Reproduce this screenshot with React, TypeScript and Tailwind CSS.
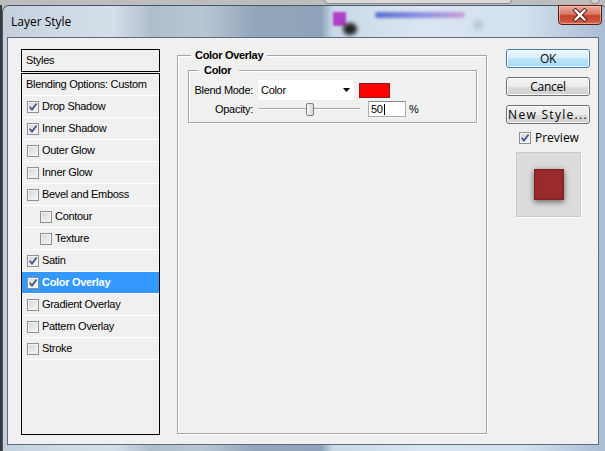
import React from "react";

type Row = { label: string; checked: boolean; indent?: boolean; selected?: boolean };

const rows: Row[] = [
  { label: "Drop Shadow", checked: true },
  { label: "Inner Shadow", checked: true },
  { label: "Outer Glow", checked: false },
  { label: "Inner Glow", checked: false },
  { label: "Bevel and Emboss", checked: false },
  { label: "Contour", checked: false, indent: true },
  { label: "Texture", checked: false, indent: true },
  { label: "Satin", checked: true },
  { label: "Color Overlay", checked: true, selected: true },
  { label: "Gradient Overlay", checked: false },
  { label: "Pattern Overlay", checked: false },
  { label: "Stroke", checked: false },
];

function CheckBox({ checked }: { checked: boolean }) {
  return (
    <span className="flex h-[12px] w-[12px] shrink-0 items-center justify-center border border-[#8e8f8f] bg-[linear-gradient(135deg,#d2d4d8,#f8f8f8)] shadow-[inset_0_0_0_1px_#f4f4f4]">
      {checked && (
        <svg width="10" height="10" viewBox="0 0 10 10">
          <path d="M1.6 4.8 L4 7.6 L8.6 1.6" fill="none" stroke="#3f5580" strokeWidth="1.7" />
        </svg>
      )}
    </span>
  );
}

function Button({ children, primary, wide }: { children: React.ReactNode; primary?: boolean; wide?: boolean }) {
  return (
    <div
      className={
        "flex h-[19px] w-[84px] items-center justify-center rounded-[3px] border text-[12px] text-black shadow-[inset_0_0_0_1px_#fbfbfb] font-['Open_Sans',sans-serif] " +
        (primary
          ? "border-[#3c7fb1] bg-[linear-gradient(180deg,#eaf6fd_0%,#d9f0fc_50%,#bee6fd_50%,#a7d9f5_100%)]"
          : "border-[#707070] bg-[linear-gradient(180deg,#f2f2f2_0%,#ebebeb_50%,#dddddd_50%,#cfcfcf_100%)]") +
        (wide ? " tracking-[1.3px]" : "")
      }
    >
      {children}
    </div>
  );
}

export default function App() {
  return (
    <div className="relative h-[451px] w-[605px] overflow-hidden bg-[linear-gradient(90deg,#3a3a3a_0px,#3a3a3a_2px,#b9b9b9_2px)] font-['Liberation_Sans',Arial,sans-serif] text-[11px] tracking-[-0.3px] text-black">
      {/* background window edge behind the dialog */}
      <div className="absolute left-0 top-0 h-[5px] w-[605px] bg-[#bdbdbd]" />
      <div className="absolute left-[324px] top-[-4px] h-[8px] w-[188px] rounded-[4px] border border-[#8a8a8a] bg-[#dadada]" />
      <div className="absolute left-[590px] top-[-4px] h-[8px] w-[10px] rounded-full border border-[#8a8a8a] bg-[#d0d0d0]" />

      {/* dialog window */}
      <div className="relative ml-[2px] mt-[5px] h-[450px] w-[606px] rounded-t-[7px] border border-[#4a5768] bg-[linear-gradient(90deg,#c4d0dc_0px,#cfdae5_60px,#d4dfe9_110px,#aebdcc_150px,#b9c7d4_200px,#93a7bc_250px,#8ea3b9_318px,#c9d9e8_330px,#dae6f1_420px,#d2e1ee_520px,#a9bdd4_600px)]">
        {/* title bar */}
        <div className="relative flex h-[31px] items-center overflow-hidden pl-[8px]">
          <div className="absolute left-[330px] top-[6px] h-[14px] w-[13px] bg-[#b13ec6] blur-[1px]" />
          <div className="absolute left-[340px] top-[17px] h-[12px] w-[14px] rounded-full bg-[#222] blur-[2px]" />
          <div className="absolute left-[372px] top-[6px] h-[6px] w-[90px] rounded-full bg-[linear-gradient(90deg,#5b6fd0,#8d8ee0,#c9a2d9)] blur-[1.5px]" />
          <div className="absolute left-[470px] top-[14px] h-[10px] w-[10px] rounded-full bg-[#b9c6d6] blur-[2px]" />
          <span className="relative font-['Open_Sans',sans-serif] text-[12px] tracking-normal text-black">Layer Style</span>
        </div>

        {/* close button */}
        <div className="absolute left-[555px] top-[-1px] flex h-[20px] w-[44px] items-center justify-center rounded-b-[4px] border border-[#5a1a10] bg-[linear-gradient(180deg,#e9a99c_0%,#d87864_45%,#c4402a_55%,#d6634c_100%)] shadow-[inset_0_0_0_1px_rgba(255,220,210,0.5)]">
          <svg width="16" height="14" viewBox="0 0 16 14">
            <path d="M3.5 2.5 L12.5 11.5 M12.5 2.5 L3.5 11.5" stroke="#45140c" strokeWidth="4.2" strokeLinecap="square" />
            <path d="M3.5 2.5 L12.5 11.5 M12.5 2.5 L3.5 11.5" stroke="#ffffff" strokeWidth="2.4" strokeLinecap="square" />
          </svg>
        </div>

        {/* client area */}
        <div className="ml-[4px] h-[408px] w-[592px] border border-[#5d6c7e] bg-[#f0f0f0]">
          <div className="flex h-full">
            {/* left list */}
            <div className="pl-[13px] pt-[11px]">
              <div className="flex h-[23px] w-[139px] items-center border border-black pl-[4px]">Styles</div>
              <div className="mt-[1px] h-[362px] w-[139px] border border-black">
                <div className="flex h-[22px] items-center border-b border-white pl-[4px]">Blending Options: Custom</div>
                {rows.map((r) => (
                  <div
                    key={r.label}
                    className={
                      "flex h-[22px] items-center gap-[3px] border-b border-white " +
                      (r.indent ? "pl-[18px] " : "pl-[5px] ") +
                      (r.selected ? "bg-[#3399ff] font-bold text-white" : "")
                    }
                  >
                    <CheckBox checked={r.checked} />
                    <span>{r.label}</span>
                  </div>
                ))}
              </div>
            </div>

            {/* middle settings */}
            <div className="ml-[17px] pt-[12px]">
              <fieldset className="h-[384px] w-[310px] border border-[#a6a6a6] pl-[10px] pr-[9px] shadow-[inset_1px_1px_0_#ffffff,1px_1px_0_#ffffff]">
                <legend className="ml-[3px] bg-[#f0f0f0] px-[4px] text-[11px] font-bold leading-[11px]">Color Overlay</legend>
                <fieldset className="mt-[4px] w-[289px] border border-[#a6a6a6] pb-[5px] shadow-[inset_1px_1px_0_#ffffff,1px_1px_0_#ffffff]">
                  <legend className="ml-[9px] bg-[#f0f0f0] pl-[6px] pr-[8px] text-[11px] font-bold leading-[11px]">Color</legend>
                  <div className="mt-[3px] flex h-[22px] items-center">
                    <span className="w-[64px] text-right">Blend Mode:</span>
                    <div className="ml-[4px] flex h-[22px] w-[98px] items-center justify-between bg-white pl-[4px] pr-[5px] shadow-[inset_0_0_0_1px_#ececec]">
                      <span>Color</span>
                      <svg width="7" height="4" viewBox="0 0 7 4">
                        <path d="M0 0 H7 L3.5 4 Z" fill="#000" />
                      </svg>
                    </div>
                    <div className="ml-[4px] h-[15px] w-[31px] border border-[#8c1a1a] bg-[#ff0000]" />
                  </div>
                  <div className="flex h-[16px] items-center">
                    <span className="w-[64px] text-right">Opacity:</span>
                    <div className="relative ml-[5px] flex h-[16px] w-[102px] items-center">
                      <div className="h-[2px] w-full border-t border-[#a7a7a7] border-b-white" style={{ borderBottomWidth: 1 }} />
                      <div className="absolute left-[48px] top-[2px] h-[13px] w-[8px] rounded-[2px] border border-[#7d7d7d] bg-[linear-gradient(90deg,#fafafa,#d6d6d6)]" />
                    </div>
                    <div className="ml-[8px] flex h-[16px] w-[38px] items-center border border-[#abadb3] border-t-[#8a8c92] bg-white pl-[2px]">
                      <span>50</span>
                      <span className="ml-[1px] h-[11px] w-[1px] bg-black" />
                    </div>
                    <span className="ml-[3px]">%</span>
                  </div>
                </fieldset>
              </fieldset>
            </div>

            {/* right buttons */}
            <div className="ml-[19px] flex flex-col pt-[11px]">
              <div className="flex flex-col gap-[9px]">
                <Button primary>OK</Button>
                <Button>Cancel</Button>
                <Button wide>New Style...</Button>
              </div>
              <div className="mt-[7px] flex h-[14px] items-center gap-[4px] pl-[13px]">
                <CheckBox checked />
                <span className="font-['Open_Sans',sans-serif] text-[12px] tracking-normal">Preview</span>
              </div>
              <div className="ml-[10px] mt-[7px] flex h-[65px] w-[65px] items-center justify-center border border-[#c9c9c9] bg-[#dcdcdc] shadow-[1px_1px_0_#ffffff]">
                <div className="h-[31px] w-[30px] bg-[#9b2a2b] shadow-[0_2px_6px_rgba(0,0,0,0.55),inset_0_0_3px_rgba(60,0,0,0.6)]" />
              </div>
            </div>
          </div>
        </div>
      </div>
    </div>
  );
}
